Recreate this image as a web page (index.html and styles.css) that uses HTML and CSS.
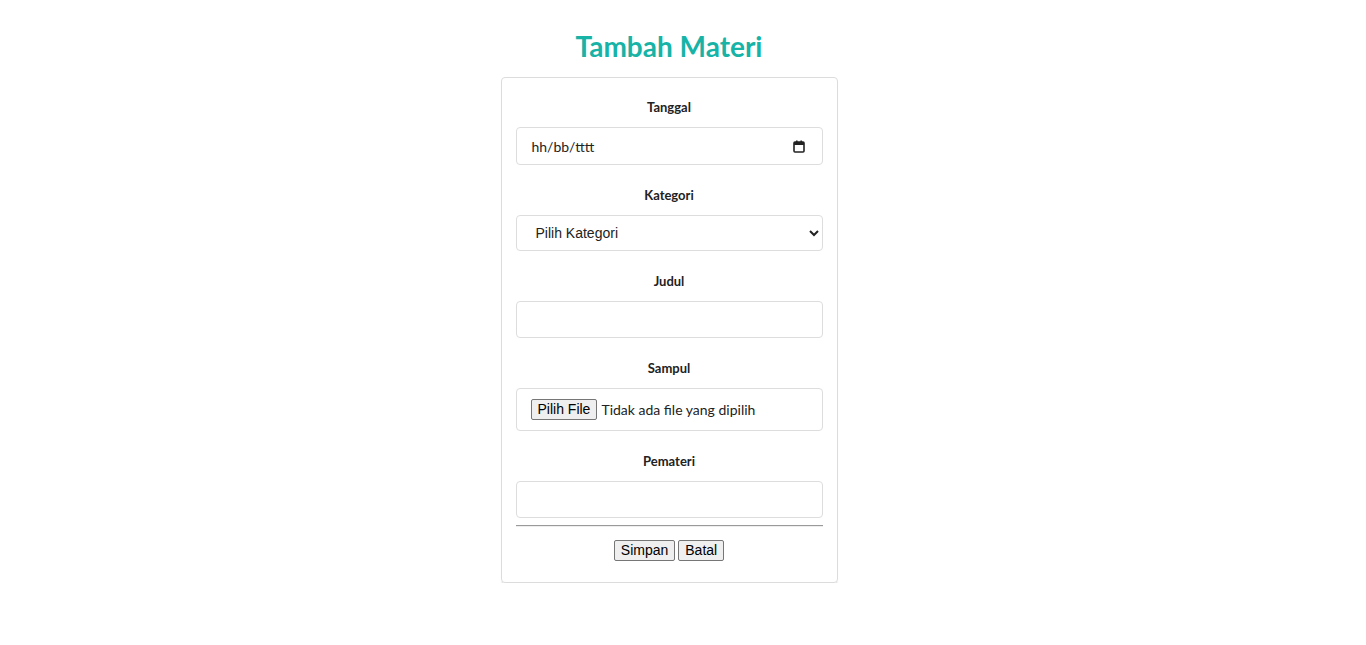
FILE: index.html
```html
<!DOCTYPE html>
<html lang="id">
<head>
<meta charset="utf-8">
<title>Tambah Materi</title>
<link rel="stylesheet" href="styles.css">
</head>
<body>
<main class="page">
<h1 class="title">Tambah Materi</h1>
<form class="card">
  <div class="group">
    <label class="label">Tanggal</label>
    <div class="control date">
      <span class="date-text">hh/bb/tttt</span>
      <svg class="cal" width="12" height="13" viewBox="0 0 12 13" aria-hidden="true">
        <rect x="1" y="2" width="10" height="10" rx="1" fill="none" stroke="#222" stroke-width="1.6"/>
        <rect x="1" y="2" width="10" height="3" fill="#222"/>
        <rect x="3" y="0.5" width="1.6" height="2" fill="#222"/>
        <rect x="7.4" y="0.5" width="1.6" height="2" fill="#222"/>
      </svg>
    </div>
  </div>
  <div class="group">
    <label class="label">Kategori</label>
    <select class="control select">
      <option>Pilih Kategori</option>
    </select>
  </div>
  <div class="group">
    <label class="label">Judul</label>
    <input class="control text" type="text">
  </div>
  <div class="group">
    <label class="label">Sampul</label>
    <div class="control file">
      <button type="button" class="btn">Pilih File</button>
      <span class="file-text">Tidak ada file yang dipilih</span>
    </div>
  </div>
  <div class="group group-last">
    <label class="label">Pemateri</label>
    <input class="control text" type="text">
  </div>
  <hr class="divider">
  <div class="actions">
    <button type="button" class="btn">Simpan</button>
    <button type="button" class="btn">Batal</button>
  </div>
</form>
</main>
</body>
</html>
```
FILE: styles.css
```css
html, body {
  margin: 0;
  padding: 0;
  background: #fff;
}
body {
  font-family: Lato, "Liberation Sans", sans-serif;
  color: #222;
}
.page {
  padding-right: 28px;
}
.title {
  margin: 29px 0 14px;
  font-size: 28px;
  line-height: 34px;
  font-weight: 700;
  text-align: center;
  color: #17b3a7;
}
.card {
  box-sizing: border-box;
  width: 337px;
  margin: 0 auto;
  padding: 20px 14px 21px;
  border: 1px solid #dcdcdc;
  border-radius: 4px;
  box-shadow: 0 2px 1px rgba(0,0,0,0.06), 0 4px 1px -1px rgba(0,0,0,0.09);
  display: flex;
  flex-direction: column;
}
.group {
  display: flex;
  flex-direction: column;
  margin-bottom: 21px;
}
.group-last {
  margin-bottom: 0;
}
.label {
  display: block;
  text-align: center;
  font-size: 13px;
  line-height: 18px;
  font-weight: 700;
  color: #222;
  margin-bottom: 11px;
}
.control {
  box-sizing: border-box;
  width: 100%;
  border: 1px solid #ddd;
  border-radius: 4px;
  background: #fff;
  margin: 0;
}
.date {
  height: 38px;
  display: flex;
  align-items: center;
  justify-content: space-between;
  padding: 0 17px 0 15px;
}
.date-text {
  font-family: Lato, sans-serif;
  font-size: 14px;
  color: #222;
}
.cal {
  display: block;
}
.select {
  height: 36px;
  padding: 0 10px 0 15px;
  font-family: "Liberation Sans", Arial, sans-serif;
  font-size: 14px;
  color: #222;
  outline: none;
}
.text {
  height: 37px;
  padding: 0 12px;
  font-family: Lato, sans-serif;
  font-size: 14px;
  outline: none;
}
.file {
  height: 43px;
  display: flex;
  align-items: center;
  gap: 4px;
  padding: 0 14px;
}
.file-text {
  font-family: Lato, sans-serif;
  font-size: 14px;
  color: #222;
}
.btn {
  font-family: "Liberation Sans", Arial, sans-serif;
  font-size: 14px;
  color: #000;
  background: #efefef;
  border: 1px solid #767676;
  border-radius: 2px;
  padding: 0 6px;
  line-height: 19px;
  height: 21px;
  margin: 0;
}
.divider {
  width: 100%;
  margin: 7px 0 13px;
  border: 0;
  border-top: 1px solid #9a9a9a;
  border-bottom: 1px solid #eee;
  height: 0;
}
.actions {
  display: flex;
  justify-content: center;
  gap: 3px;
}
```
